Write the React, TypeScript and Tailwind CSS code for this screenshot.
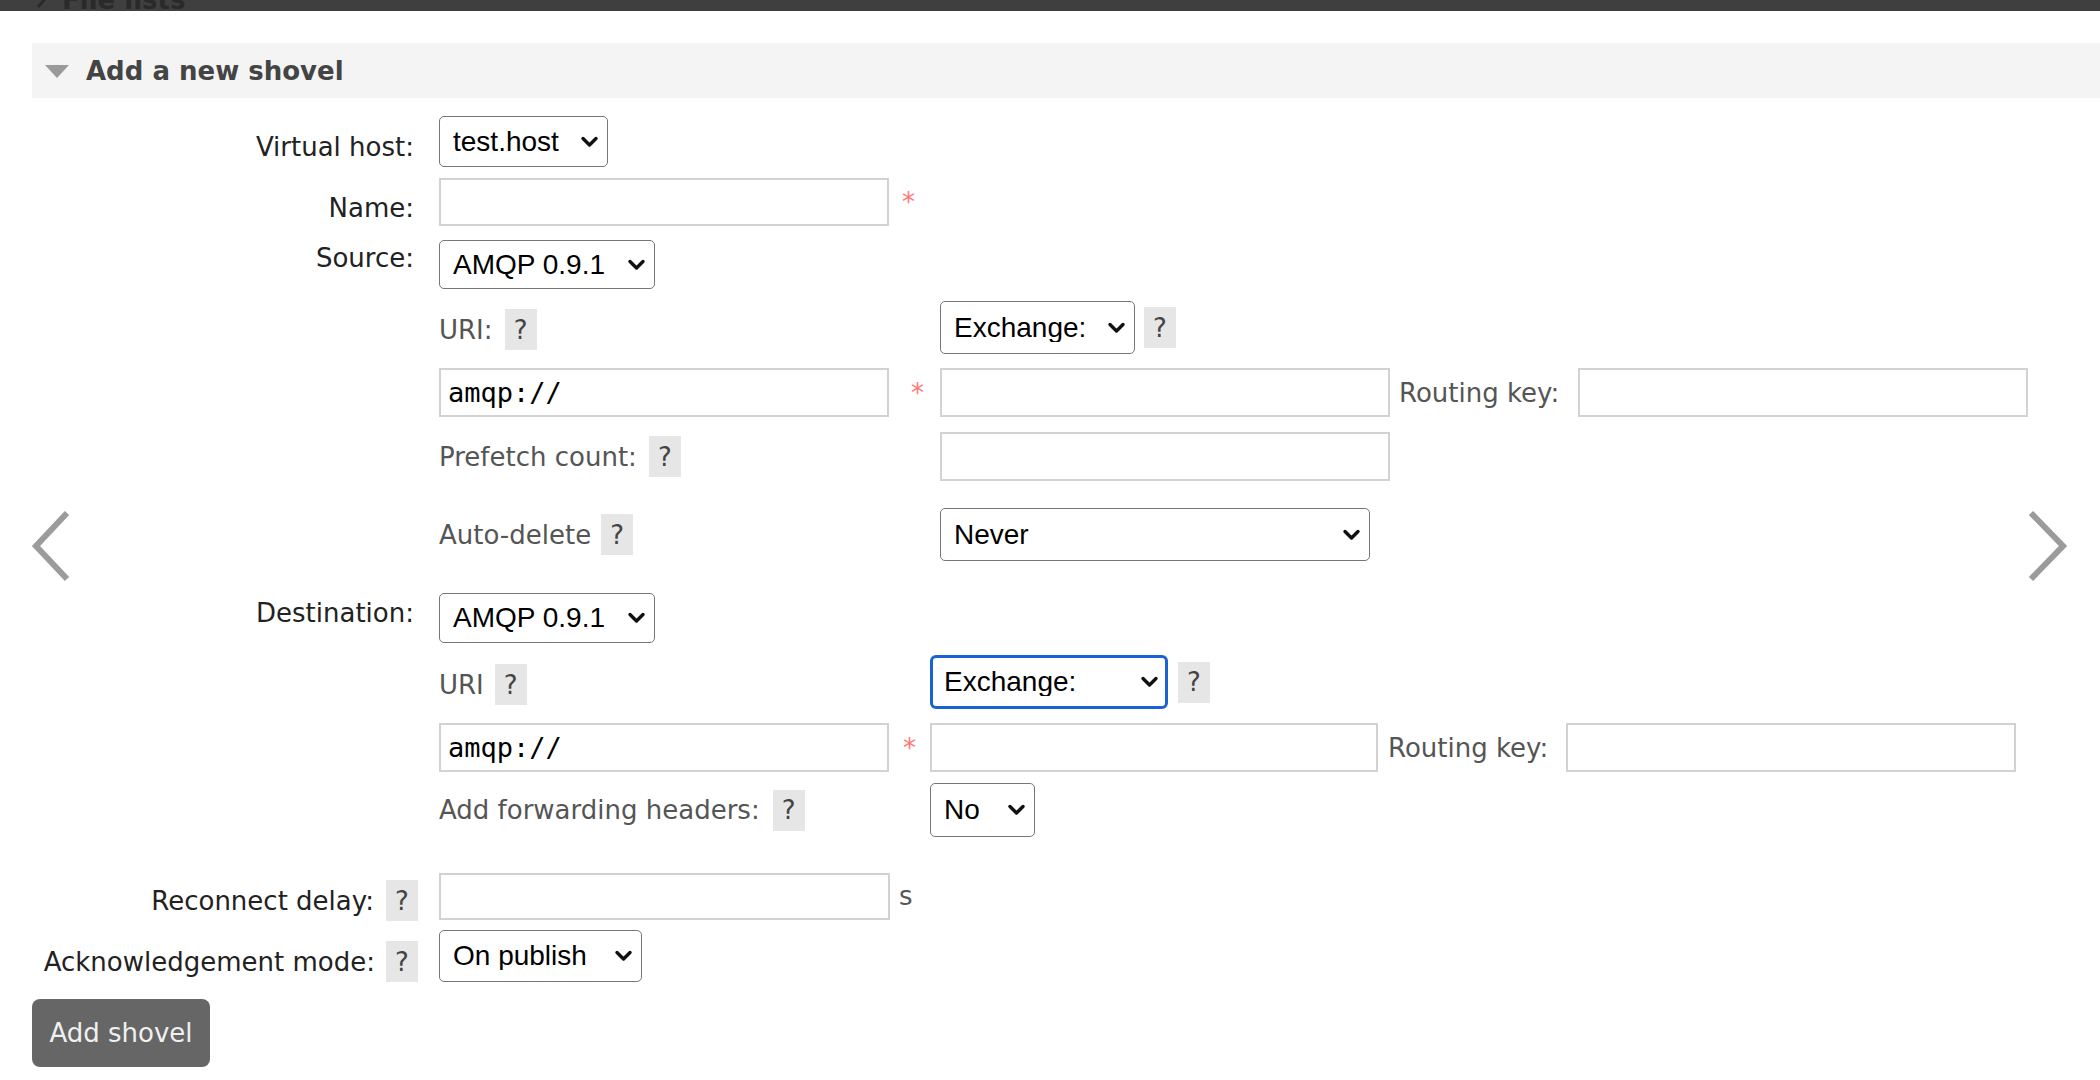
import React from "react";

function Chevron() {
  return (
    <svg
      className="pointer-events-none absolute right-[9px] top-1/2 -translate-y-1/2"
      width="19"
      height="13"
      viewBox="0 0 19 13"
      aria-hidden="true"
    >
      <path
        d="M3 3 L9.5 9.5 L16 3"
        fill="none"
        stroke="#111"
        strokeWidth="3.4"
        strokeLinecap="round"
        strokeLinejoin="round"
      />
    </svg>
  );
}

function Select({
  value,
  size,
  focused = false,
}: {
  value: string;
  size: string;
  focused?: boolean;
}) {
  return (
    <div className={`relative shrink-0 ${size}`}>
      <select
        defaultValue={value}
        className={
          focused
            ? "h-full w-full appearance-none rounded-[6px] border-[3px] border-[#1b62d4] bg-white pl-[11px] font-['Liberation_Sans',Arial,sans-serif] text-[28px] leading-none text-black outline-none"
            : "h-full w-full appearance-none rounded-[5px] border-[1.5px] border-[#767676] bg-white pl-[13px] font-['Liberation_Sans',Arial,sans-serif] text-[28px] leading-none text-black outline-none"
        }
      >
        <option value={value}>{value}</option>
      </select>
      <Chevron />
    </div>
  );
}

function TextInput({ size, value = "" }: { size: string; value?: string }) {
  return (
    <input
      defaultValue={value}
      className={`${size} shrink-0 border-2 border-[#d2d2d2] bg-white px-[7px] font-['DejaVu_Sans_Mono',monospace] text-[27px] text-black outline-none`}
    />
  );
}

function Help() {
  return (
    <span className="inline-flex h-[41px] w-[32px] shrink-0 items-center justify-center bg-[#e6e6e6] text-[26px] leading-none text-[#444]">
      ?
    </span>
  );
}

function Star({ cls }: { cls: string }) {
  return <span className={`${cls} text-[#f77]`}>*</span>;
}

export default function App() {
  return (
    <div className="relative min-h-[1080px] w-full overflow-hidden bg-white font-['DejaVu_Sans',Verdana,sans-serif] text-[26px] leading-[30px] text-[#222]">
      {/* top bar (scrolled) */}
      <div className="h-[11px] overflow-hidden bg-[#3f3f3f]">
        <div className="-mt-[15px] flex items-center gap-[16px] pl-[36px] text-[#2a2a2a]">
          <svg width="10" height="18" viewBox="0 0 10 18" aria-hidden="true">
            <path d="M2 2 L8 9 L2 16" stroke="#2a2a2a" strokeWidth="3" fill="none" />
          </svg>
          <span className="font-bold">File lists</span>
        </div>
      </div>

      <div className="pl-[32px] pt-[32px]">
        {/* section header */}
        <div className="flex h-[55px] items-center bg-[#f4f4f4]">
          <svg className="ml-[13px]" width="24" height="14" viewBox="0 0 24 14" aria-hidden="true">
            <path d="M0 1 H24 L12 14 Z" fill="#9a9a9a" />
          </svg>
          <h2 className="ml-[17px] font-bold text-[#444]">Add a new shovel</h2>
        </div>

        {/* Virtual host */}
        <div className="mt-[18px] grid h-[51px] grid-cols-[386px_1fr] gap-x-[21px]">
          <div className="pr-[4px] pt-[16px] text-right">Virtual host:</div>
          <div>
            <Select value="test.host" size="w-[169px] h-[51px]" />
          </div>
        </div>

        {/* Name */}
        <div className="mt-[11px] grid h-[48px] grid-cols-[386px_1fr] gap-x-[21px]">
          <div className="pr-[4px] pt-[15px] text-right">Name:</div>
          <div className="flex items-center gap-[13px]">
            <TextInput size="w-[450px] h-[48px]" />
            <Star cls="" />
          </div>
        </div>

        {/* Source */}
        <div className="mt-[14px] grid h-[49px] grid-cols-[386px_1fr] gap-x-[21px]">
          <div className="pr-[4px] pt-[3px] text-right">Source:</div>
          <div>
            <Select value="AMQP 0.9.1" size="w-[216px] h-[49px]" />
          </div>
        </div>

        <div className="mt-[12px] grid grid-cols-[386px_1fr] gap-x-[21px]">
          <div className="col-start-2 flex flex-col text-[#555]">
            <div className="grid h-[53px] grid-cols-[450px_51px_450px_188px_450px] items-center">
              <div className="flex items-center gap-[12px] self-stretch pt-[4px]">
                <span>URI:</span>
                <Help />
              </div>
              <div />
              <div className="col-span-3 flex items-center gap-[9px]">
                <Select value="Exchange:" size="w-[195px] h-[53px]" />
                <Help />
              </div>
            </div>

            <div className="mt-[14px] grid h-[49px] grid-cols-[450px_51px_450px_188px_450px] items-center">
              <TextInput size="w-[450px] h-[49px]" value="amqp://" />
              <Star cls="pl-[22px]" />
              <TextInput size="w-[450px] h-[49px]" />
              <span className="pl-[9px]">Routing key:</span>
              <TextInput size="w-[450px] h-[49px]" />
            </div>

            <div className="mt-[15px] grid h-[49px] grid-cols-[450px_51px_450px_188px_450px] items-center">
              <div className="flex items-center gap-[12px]">
                <span>Prefetch count:</span>
                <Help />
              </div>
              <div />
              <TextInput size="w-[450px] h-[49px]" />
            </div>

            <div className="mt-[27px] grid h-[53px] grid-cols-[450px_51px_450px_188px_450px] items-center">
              <div className="flex items-center gap-[10px]">
                <span>Auto-delete</span>
                <Help />
              </div>
              <div />
              <div className="col-span-3">
                <Select value="Never" size="w-[430px] h-[53px]" />
              </div>
            </div>
          </div>
        </div>

        {/* Destination */}
        <div className="mt-[32px] grid h-[50px] grid-cols-[386px_1fr] gap-x-[21px]">
          <div className="pr-[4px] pt-[5px] text-right">Destination:</div>
          <div>
            <Select value="AMQP 0.9.1" size="w-[216px] h-[50px]" />
          </div>
        </div>

        <div className="mt-[12px] grid grid-cols-[386px_1fr] gap-x-[21px]">
          <div className="col-start-2 flex flex-col text-[#555]">
            <div className="grid h-[54px] grid-cols-[450px_41px_448px_188px_450px] items-center">
              <div className="flex items-center gap-[11px] self-stretch pt-[5px]">
                <span>URI</span>
                <Help />
              </div>
              <div />
              <div className="col-span-3 flex items-center gap-[10px]">
                <Select value="Exchange:" size="w-[238px] h-[54px]" focused />
                <Help />
              </div>
            </div>

            <div className="mt-[14px] grid h-[49px] grid-cols-[450px_41px_448px_188px_450px] items-center">
              <TextInput size="w-[450px] h-[49px]" value="amqp://" />
              <Star cls="pl-[14px]" />
              <TextInput size="w-[448px] h-[49px]" />
              <span className="pl-[10px]">Routing key:</span>
              <TextInput size="w-[450px] h-[49px]" />
            </div>

            <div className="mt-[11px] grid h-[54px] grid-cols-[450px_41px_448px_188px_450px] items-center">
              <div className="flex items-center gap-[13px]">
                <span>Add forwarding headers:</span>
                <Help />
              </div>
              <div />
              <div className="col-span-3">
                <Select value="No" size="w-[105px] h-[54px]" />
              </div>
            </div>
          </div>
        </div>

        {/* Reconnect delay */}
        <div className="mt-[34px] grid h-[47px] grid-cols-[386px_1fr] gap-x-[21px]">
          <div className="flex items-start justify-end gap-[12px] pt-[9px]">
            <span className="mt-[6px]">Reconnect delay:</span>
            <Help />
          </div>
          <div className="flex items-center gap-[9px]">
            <TextInput size="w-[451px] h-[47px]" />
            <span className="text-[#555]">s</span>
          </div>
        </div>

        {/* Acknowledgement mode */}
        <div className="mt-[12px] grid h-[52px] grid-cols-[386px_1fr] gap-x-[21px]">
          <div className="flex items-start justify-end gap-[11px] pt-[11px]">
            <span className="mt-[6px]">Acknowledgement mode:</span>
            <Help />
          </div>
          <div>
            <Select value="On publish" size="w-[203px] h-[52px]" />
          </div>
        </div>

        <button
          type="button"
          className="mt-[17px] h-[68px] w-[178px] rounded-[8px] bg-[#666] text-[26px] text-[#f0f0f0]"
        >
          Add shovel
        </button>
      </div>

      {/* carousel arrows overlay */}
      <svg
        className="pointer-events-none absolute left-[30px] top-[508px]"
        width="44"
        height="78"
        viewBox="0 0 44 78"
        aria-hidden="true"
      >
        <path d="M37 5 L6 38 L37 71" stroke="#9b9b9b" strokeWidth="6" fill="none" />
      </svg>
      <svg
        className="pointer-events-none absolute left-[2026px] top-[508px]"
        width="44"
        height="78"
        viewBox="0 0 44 78"
        aria-hidden="true"
      >
        <path d="M5 5 L37 38 L5 71" stroke="#9b9b9b" strokeWidth="6" fill="none" />
      </svg>
    </div>
  );
}
